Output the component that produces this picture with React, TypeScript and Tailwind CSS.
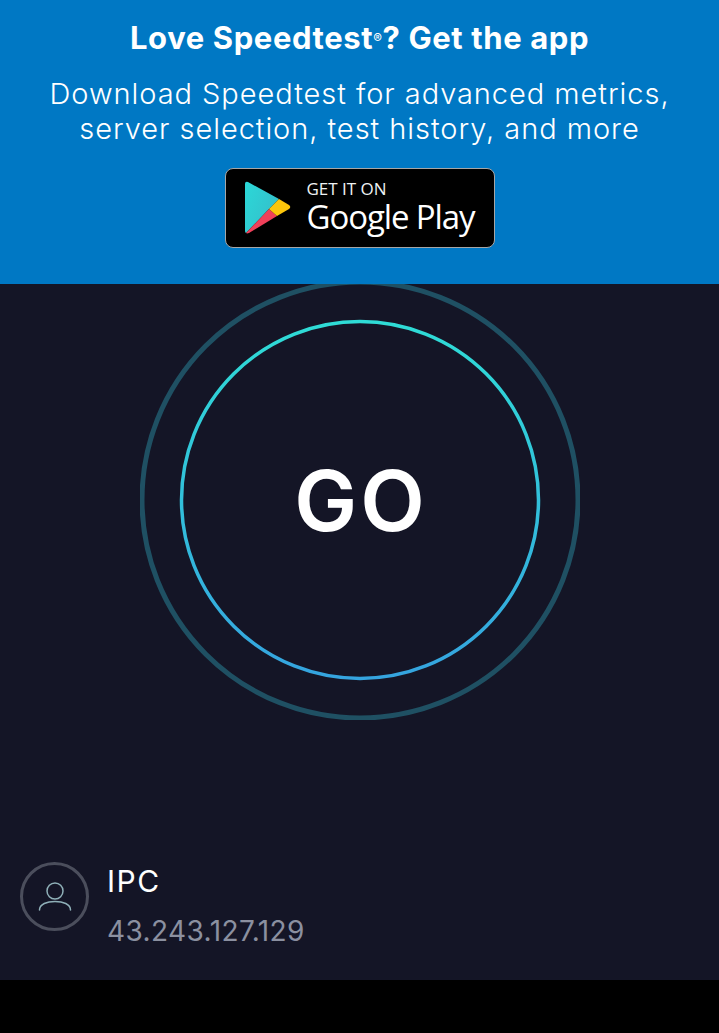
// google play triangle
function PlayLogo() {
  return (
    <svg width="48" height="54" viewBox="0 0 48 54" className="shrink-0">
      <defs>
        <linearGradient id="playTop" x1="0" y1="0" x2="1" y2="0.6">
          <stop offset="0%" stopColor="#2bd8d8" />
          <stop offset="100%" stopColor="#35bfca" />
        </linearGradient>
      </defs>
      <path d="M1 3 Q1 0 4 1 L35 18 L25 28 L2 52 Q1 51.5 1 50 Z" fill="url(#playTop)" />
      <path d="M2 52 L25 28 L33 35 L5 52 Q3 52.8 2 52 Z" fill="#f0405a" />
      <path d="M25 28 L35 18 L45 24 Q47.5 26 45 28 L33 35 Z" fill="#fdc60b" />
    </svg>
  );
}

function GoButton() {
  return (
    <div className="relative z-0 -mt-1 mx-auto w-[440px] h-[440px] flex items-center justify-center">
      <svg width="440" height="440" viewBox="0 0 440 440" className="absolute inset-0">
        <defs>
          <linearGradient id="ring" x1="0" y1="0" x2="0" y2="1">
            <stop offset="0%" stopColor="#2fdcd6" />
            <stop offset="100%" stopColor="#35a4df" />
          </linearGradient>
        </defs>
        <circle cx="220" cy="220" r="218" fill="none" stroke="#1f5063" strokeWidth="5" />
        <circle cx="220" cy="220" r="178.5" fill="none" stroke="url(#ring)" strokeWidth="3.5" />
      </svg>
      <span className="relative mt-[2px] text-white text-[84px] leading-none font-semibold tracking-[3px] pl-[3px]">GO</span>
    </div>
  );
}

function UserGlyph() {
  return (
    <svg width="38" height="38" viewBox="0 0 38 38" fill="none" stroke="#8fb0b8" strokeWidth="1.5" strokeLinecap="round">
      <circle cx="19" cy="13" r="8" />
      <path d="M3.5 32 C3.5 26 11 23.5 19 23.5 S34.5 26 34.5 32" />
    </svg>
  );
}

export default function App() {
  return (
    <div className="w-[719px] h-[1033px] flex flex-col overflow-hidden bg-black font-['Inter',sans-serif]">
      {/* banner */}
      <div className="relative z-10 h-[284px] shrink-0 bg-[#0078c4] text-white text-center pt-[20px]">
        <h1 className="text-[31px] leading-[36px] font-bold tracking-[0.6px]">
          Love Speedtest<sup className="text-[13px] font-normal">®</sup>? Get the app
        </h1>
        <p className="mt-[20px] text-[29px] leading-[35px] font-light tracking-[0.95px]">
          Download Speedtest for advanced metrics,
          <br />
          server selection, test history, and more
        </p>
        <div className="mt-[22px] mx-auto w-[270px] h-[80px] rounded-[8px] border border-[#a6a6a6] bg-black flex items-center gap-[15px] pl-[18px]">
          <PlayLogo />
          <div className="flex flex-col text-left font-['Open_Sans',sans-serif]">
            <span className="text-[17px] leading-[18px] text-[#eef2f4]">GET IT ON</span>
            <span className="text-[33px] leading-[38px] tracking-[-1.1px]">Google Play</span>
          </div>
        </div>
      </div>

      {/* speedtest area */}
      <div className="h-[696px] shrink-0 bg-[#141526] flex flex-col">
        <GoButton />
        <div className="mt-[142px] ml-[20px] flex items-start gap-[18px]">
          <div className="w-[69px] h-[69px] rounded-full border-[3px] border-[#4b4e5c] flex items-center justify-center">
            <UserGlyph />
          </div>
          <div className="flex flex-col mt-[1px]">
            <span className="text-white text-[30px] leading-[36px] tracking-[1.5px]">IPC</span>
            <span className="mt-[16px] text-[#8b90a0] text-[28px] leading-[32px] tracking-[0.4px]">43.243.127.129</span>
          </div>
        </div>
      </div>

      {/* bottom strip */}
      <div className="flex-1 bg-black" />
    </div>
  );
}
